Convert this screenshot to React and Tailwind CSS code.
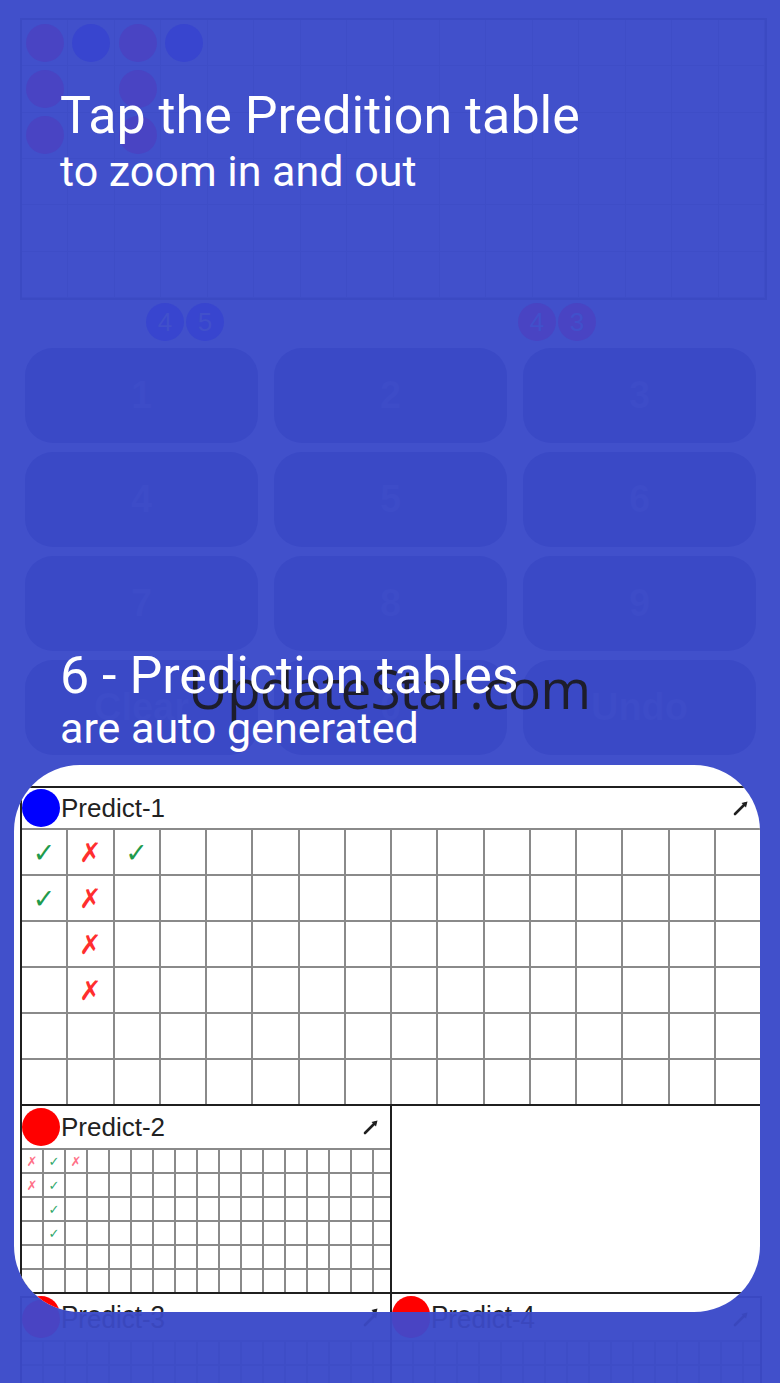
import React from 'react';

const ARIAL = "font-['Liberation_Sans',Arial,sans-serif]";

const bigMarks = { '0-0': 'c', '0-1': 'x', '0-2': 'c', '1-0': 'c', '1-1': 'x', '2-1': 'x', '3-1': 'x' };
const smallMarks = { '0-0': 'x', '0-1': 'c', '0-2': 'x', '1-0': 'x', '1-1': 'c', '2-1': 'c', '3-1': 'c' };

const ExpandIcon = ({ color = '#1f1f1f' }) => (
  <svg width="18" height="18" viewBox="0 0 18 18">
    <path d="M3 15 L13 5" stroke={color} strokeWidth="2.6" strokeLinecap="round" />
    <path d="M15.5 2.5 L9.5 4 L14 8.5 Z" fill={color} />
  </svg>
);

const Mark = ({ type, small }) => {
  if (!type) return null;
  const size = small ? 'text-[13px]' : 'text-[27px]';
  const color = type === 'c'
    ? (small ? 'text-[#2fa86a]' : 'text-[#1f9b4c]')
    : (small ? 'text-[#ff7088]' : 'text-[#ff2e2e]');
  return (
    <span className={`font-['DejaVu_Sans',sans-serif] leading-none ${size} ${color}`}>
      {type === 'c' ? '✓' : '✗'}
    </span>
  );
};

const Header = ({ label, dot, faint, height }) => (
  <div className={`flex items-center ${height}`}>
    <span className={`w-[38px] h-[38px] rounded-full shrink-0 ${dot}`} />
    <span className={`ml-[1px] text-[26px] leading-none ${ARIAL} ${faint ? 'text-[#3a47bd]' : 'text-[#222]'}`}>
      {label}
    </span>
    <span className="ml-auto mr-[10px] flex">
      <ExpandIcon color={faint ? '#3a47bd' : '#1f1f1f'} />
    </span>
  </div>
);

const BigGrid = () => (
  <div className="grid grid-cols-16 gap-[2px] pt-[2px] bg-[#8a8a8a]">
    {Array.from({ length: 96 }).map((_, i) => {
      const r = Math.floor(i / 16);
      const c = i % 16;
      return (
        <div key={i} className="h-[44px] bg-white flex items-center justify-center">
          <Mark type={bigMarks[`${r}-${c}`]} />
        </div>
      );
    })}
  </div>
);

const SmallGrid = ({ marks = {}, faint }) => (
  <div className={`grid grid-cols-[repeat(16,20px)_1fr] gap-[2px] pt-[2px] ${faint ? 'bg-[#3e4dc7]' : 'bg-[#8a8a8a]'}`}>
    {Array.from({ length: 102 }).map((_, i) => {
      const r = Math.floor(i / 17);
      const c = i % 17;
      return (
        <div key={i} className={`h-[22px] flex items-center justify-center ${faint ? 'bg-[#4150cb]' : 'bg-white'}`}>
          {!faint && <Mark type={marks[`${r}-${c}`]} small />}
        </div>
      );
    })}
  </div>
);

const scoreDots = { '0-0': 'r', '0-1': 'b', '0-2': 'r', '0-3': 'b', '1-0': 'r', '1-2': 'r', '2-0': 'r', '2-2': 'r' };

const ScoreGrid = () => (
  <div className="ml-[20px] w-[747px] h-[282px] border-2 border-[#3b4ac3] grid grid-cols-16 grid-rows-6">
    {Array.from({ length: 96 }).map((_, i) => {
      const r = Math.floor(i / 16);
      const c = i % 16;
      const d = scoreDots[`${r}-${c}`];
      return (
        <div key={i} className="border-r border-b border-[#3e4dc7] flex items-center justify-center">
          {d && (
            <span className={`w-[38px] h-[38px] rounded-full ${d === 'r' ? 'bg-[#4944c3]' : 'bg-[#3845cf]'}`} />
          )}
        </div>
      );
    })}
  </div>
);

const Pill = ({ n, tone }) => (
  <span className={`w-[38px] h-[38px] rounded-full flex items-center justify-center text-[26px] text-[#4150cb] ${ARIAL} ${tone}`}>
    {n}
  </span>
);

const keys = ['1', '2', '3', '4', '5', '6', '7', '8', '9', 'Clear', '0', 'Undo'];

export default function App() {
  return (
    <div className="relative w-[780px] h-[1383px] overflow-hidden bg-[#4150cb] font-['Roboto',sans-serif]">
      {/* faded app underneath */}
      <div className="flex flex-col pt-[18px]">
        <ScoreGrid />

        <div className="flex mt-[3px] h-[38px]">
          <div className="ml-[146px] flex gap-[2px]">
            <Pill n="4" tone="bg-[#3845cf]" />
            <Pill n="5" tone="bg-[#3845cf]" />
          </div>
          <div className="ml-[294px] flex gap-[2px]">
            <Pill n="4" tone="bg-[#4944c3]" />
            <Pill n="3" tone="bg-[#4944c3]" />
          </div>
        </div>

        <div className="mt-[7px] ml-[25px] w-[731px] grid grid-cols-3 gap-x-[16px] gap-y-[9px]">
          {keys.map((k) => (
            <div key={k} className="h-[95px] rounded-[28px] bg-[#3a49c6] flex items-center justify-center">
              <span className={`text-[38px] font-bold text-[#3d4cc8] ${ARIAL}`}>{k}</span>
            </div>
          ))}
        </div>

        <div className="mt-[541px] ml-[20px] flex">
          <div className="w-[372px] border-x-2 border-t-2 border-[#3a48c2]">
            <Header label="Predict-3" dot="bg-[#4944c3]" faint height="h-[42px]" />
            <SmallGrid faint />
          </div>
          <div className="w-[370px] border-r-2 border-t-2 border-[#3a48c2]">
            <Header label="Predict-4" dot="bg-[#4944c3]" faint height="h-[42px]" />
            <SmallGrid faint />
          </div>
        </div>
      </div>

      {/* watermark */}
      <div className="absolute left-[188px] top-[653px] text-[55px] leading-[70px] tracking-[-1px] text-[#1d1d2b] font-['Open_Sans',sans-serif]">
        UpdateStar.com
      </div>

      {/* captions */}
      <div className="absolute left-[60px] top-[87px] text-white">
        <p className="text-[52px] leading-[58px]">Tap the Predition table</p>
        <p className="text-[43px] leading-[52px]">to zoom in and out</p>
      </div>
      <div className="absolute left-[60px] top-[647px] text-white">
        <p className="text-[52px] leading-[58px]">6 - Prediction tables</p>
        <p className="text-[43px] leading-[46px]">are auto generated</p>
      </div>

      {/* zoomed card */}
      <div className="absolute left-[14px] top-[765px] w-[746px] h-[547px] rounded-[66px] bg-white overflow-hidden">
        <div className="pt-[21px] pl-[6px] w-[748px]">
          <div className="w-[742px] border-2 border-[#1f1f1f]">
            <Header label="Predict-1" dot="bg-[#0000ff]" height="h-[40px]" />
            <BigGrid />
          </div>
          <div className="flex">
            <div className="w-[372px] border-x-2 border-b-2 border-[#1f1f1f]">
              <Header label="Predict-2" dot="bg-[#ff0000]" height="h-[42px]" />
              <SmallGrid marks={smallMarks} />
            </div>
          </div>
          <div className="flex">
            <div className="w-[372px] border-x-2 border-[#1f1f1f]">
              <Header label="Predict-3" dot="bg-[#ff0000]" height="h-[42px]" />
            </div>
            <div className="w-[370px] border-r-2 border-t-2 -mt-[2px] border-[#1f1f1f]">
              <Header label="Predict-4" dot="bg-[#ff0000]" height="h-[42px]" />
            </div>
          </div>
        </div>
      </div>
    </div>
  );
}
